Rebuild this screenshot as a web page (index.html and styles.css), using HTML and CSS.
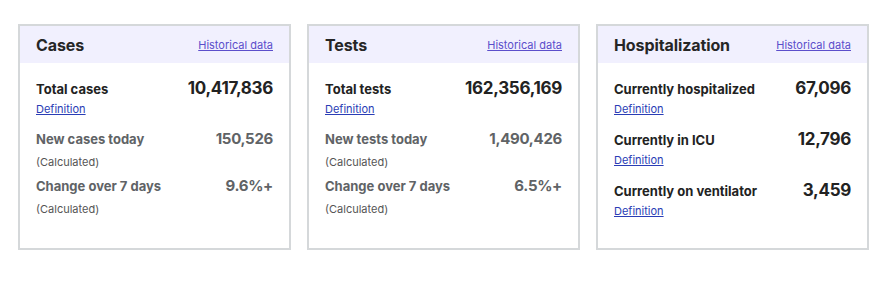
FILE: index.html
```html
<!DOCTYPE html>
<html lang="en">
<head>
    <meta charset="UTF-8">
    <title>National totals</title>
    <link rel="stylesheet" href="styles.css">
</head>
<body>
    <div class="summary-cards">
        <div class="summary-card">
            <div class="card-header">
                <h2 class="card-title">Cases</h2>
                <a class="history-link" href="#">Historical data</a>
            </div>
            <div class="card-body">
                <div class="stat">
                    <div class="stat-line">
                        <span class="stat-label">Total cases</span>
                        <span class="stat-value">10,417,836</span>
                    </div>
                    <a class="stat-note definition" href="#">Definition</a>
                </div>
                <div class="stat calculated">
                    <div class="stat-line">
                        <span class="stat-label">New cases today</span>
                        <span class="stat-value">150,526</span>
                    </div>
                    <span class="stat-note">(Calculated)</span>
                </div>
                <div class="stat calculated">
                    <div class="stat-line">
                        <span class="stat-label">Change over 7 days</span>
                        <span class="stat-value">9.6%+</span>
                    </div>
                    <span class="stat-note">(Calculated)</span>
                </div>
            </div>
        </div>

        <div class="summary-card">
            <div class="card-header">
                <h2 class="card-title">Tests</h2>
                <a class="history-link" href="#">Historical data</a>
            </div>
            <div class="card-body">
                <div class="stat">
                    <div class="stat-line">
                        <span class="stat-label">Total tests</span>
                        <span class="stat-value">162,356,169</span>
                    </div>
                    <a class="stat-note definition" href="#">Definition</a>
                </div>
                <div class="stat calculated">
                    <div class="stat-line">
                        <span class="stat-label">New tests today</span>
                        <span class="stat-value">1,490,426</span>
                    </div>
                    <span class="stat-note">(Calculated)</span>
                </div>
                <div class="stat calculated">
                    <div class="stat-line">
                        <span class="stat-label">Change over 7 days</span>
                        <span class="stat-value">6.5%+</span>
                    </div>
                    <span class="stat-note">(Calculated)</span>
                </div>
            </div>
        </div>

        <div class="summary-card">
            <div class="card-header">
                <h2 class="card-title">Hospitalization</h2>
                <a class="history-link" href="#">Historical data</a>
            </div>
            <div class="card-body">
                <div class="stat">
                    <div class="stat-line">
                        <span class="stat-label">Currently hospitalized</span>
                        <span class="stat-value">67,096</span>
                    </div>
                    <a class="stat-note definition" href="#">Definition</a>
                </div>
                <div class="stat">
                    <div class="stat-line">
                        <span class="stat-label">Currently in ICU</span>
                        <span class="stat-value">12,796</span>
                    </div>
                    <a class="stat-note definition" href="#">Definition</a>
                </div>
                <div class="stat">
                    <div class="stat-line">
                        <span class="stat-label">Currently on ventilator</span>
                        <span class="stat-value">3,459</span>
                    </div>
                    <a class="stat-note definition" href="#">Definition</a>
                </div>
            </div>
        </div>
    </div>
</body>
</html>
```

FILE: styles.css
```css
body {
    margin: 0;
    font-family: Inter, 'Noto Sans', sans-serif;
    color: #222;
    background: #fff;
}

.summary-cards {
    display: flex;
    gap: 16px;
    padding: 24px 18px;
}

.summary-card {
    flex: 0 0 273px;
    box-sizing: border-box;
    border: 2px solid #d5d8da;
    display: flex;
    flex-direction: column;
}

.card-header {
    height: 37px;
    padding: 0 16px;
    background: #f1f0fe;
    display: flex;
    align-items: center;
    justify-content: space-between;
}

.card-title {
    margin: 0;
    font-size: 16px;
    font-weight: 700;
    letter-spacing: -0.1px;
    color: #262626;
}

.history-link {
    font-size: 11px;
    color: #5b4ecb;
}

.card-body {
    padding: 14px 16px 28px;
}

.stat {
    display: flex;
    flex-direction: column;
    align-items: flex-start;
    margin-bottom: 10px;
}

.stat:last-child {
    margin-bottom: 0;
}

.stat-line {
    align-self: stretch;
    display: flex;
    justify-content: space-between;
    align-items: baseline;
    height: 22px;
    line-height: 22px;
}

.stat-label {
    font-size: 13px;
    font-weight: 700;
}

.stat-value {
    font-size: 17px;
    font-weight: 700;
    letter-spacing: -0.3px;
}

.stat-note {
    margin-top: 1px;
    font-size: 11px;
    line-height: 18px;
    color: #555;
}

.stat-note.definition {
    color: #2a3db5;
}

.calculated {
    margin-bottom: 4px;
}

.calculated .stat-line {
    color: #606366;
}

.calculated .stat-value {
    font-size: 15px;
}

.calculated .stat-note {
    margin-top: 3px;
}
```
